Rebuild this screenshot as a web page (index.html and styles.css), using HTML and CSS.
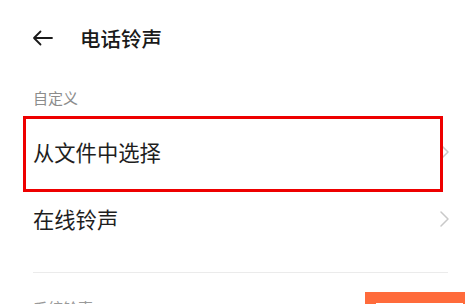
FILE: index.html
```html
<!DOCTYPE html>
<html lang="zh-CN">
<head>
<meta charset="utf-8">
<title>电话铃声</title>
<link rel="stylesheet" href="styles.css">
</head>
<body>
<div class="page">
  <header class="header">
    <svg class="back" width="21" height="16" viewBox="0 0 21 16" aria-hidden="true">
      <path d="M20 8H2M8.5 1.5L2 8l6.5 6.5" fill="none" stroke="#1a1a1a" stroke-width="1.8" stroke-linecap="round" stroke-linejoin="round"/>
    </svg>
    <h1 class="title">电话铃声</h1>
  </header>
  <div class="section-label">自定义</div>
  <div class="row">
    <span class="row-text">从文件中选择</span>
    <svg class="chev" width="9" height="16" viewBox="0 0 9 16" aria-hidden="true"><path d="M1 1l7 7-7 7" fill="none" stroke="#c9c9c9" stroke-width="1.5" stroke-linecap="round" stroke-linejoin="round"/></svg>
    <div class="highlight"></div>
  </div>
  <div class="row">
    <span class="row-text">在线铃声</span>
    <svg class="chev" width="9" height="16" viewBox="0 0 9 16" aria-hidden="true"><path d="M1 1l7 7-7 7" fill="none" stroke="#c9c9c9" stroke-width="1.5" stroke-linecap="round" stroke-linejoin="round"/></svg>
  </div>
  <div class="divider"></div>
  <div class="bottom">
    <div class="section-label sys">系统铃声</div>
    <div class="orange"><div class="orange-inner"></div></div>
  </div>
</div>
</body>
</html>
```
FILE: styles.css
```css
html, body {
  margin: 0;
  padding: 0;
  background: #ffffff;
  overflow: hidden;
}
body {
  width: 465px;
  height: 304px;
  font-family: "Noto Sans CJK SC", "Noto Sans", sans-serif;
  color: #1f1f1f;
}
.page {
  padding: 0 17px 0 33px;
}
.header {
  height: 76px;
  display: flex;
  align-items: center;
  margin-left: -1px;
}
.back {
  display: block;
}
.title {
  margin: 0 0 0 27px;
  font-size: 20.5px;
  font-weight: 500;
  line-height: 28px;
  color: #1a1a1a;
}
.section-label {
  margin-top: 12px;
  font-size: 15px;
  line-height: 20px;
  height: 20px;
  color: #8c8c8c;
}
.row {
  position: relative;
  height: 67px;
  display: flex;
  align-items: center;
  justify-content: space-between;
}
.section-label + .row {
  margin-top: 10px;
}
.row-text {
  font-size: 21.3px;
  line-height: 28px;
  color: #1e1e1e;
}
.chev {
  display: block;
  margin-right: -1px;
}
.highlight {
  position: absolute;
  left: -10px;
  top: -2px;
  width: 420px;
  height: 76px;
  box-sizing: border-box;
  border: 3px solid #ee0000;
  pointer-events: none;
}
.divider {
  margin-top: 20px;
  height: 1px;
  background: #ebebeb;
}
.bottom {
  display: flex;
  justify-content: space-between;
  align-items: flex-start;
  margin-top: 19px;
}
.sys {
  margin-top: 6px;
  color: #9a9a9a;
}
.orange {
  width: 110px;
  height: 40px;
  margin-right: -27px;
  background: #ff6b3b;
  padding: 11px 0 0 11px;
  box-sizing: border-box;
}
.orange-inner {
  width: 87px;
  height: 20px;
  background: #ffffff;
}
```
